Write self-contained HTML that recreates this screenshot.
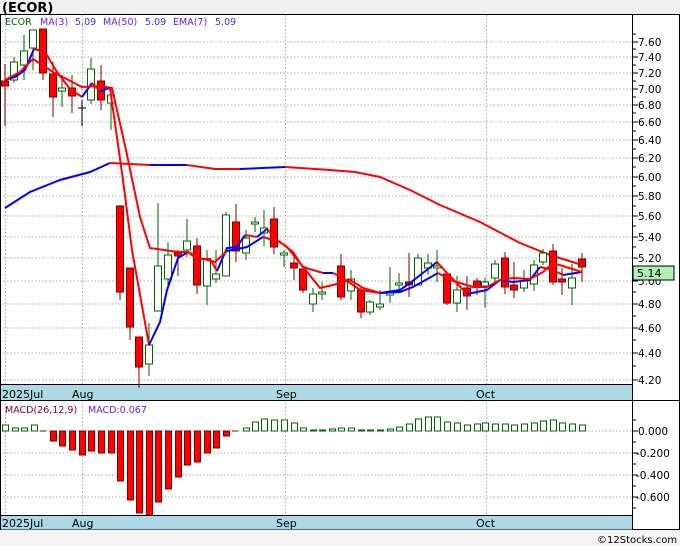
<!DOCTYPE html><html><head><style>body{margin:0;width:680px;height:546px;overflow:hidden;background:#fff;font-family:"DejaVu Sans","Liberation Sans",sans-serif}</style></head><body>
<svg width="680" height="546" xmlns="http://www.w3.org/2000/svg" font-family="DejaVu Sans, Liberation Sans, sans-serif">
<rect x="0" y="0" width="680" height="14" fill="#f0f0f0"/>
<text x="2" y="12" font-size="13" font-weight="bold" fill="#000">(ECOR)</text>
<rect x="0" y="530" width="680" height="16" fill="#f4f4f4"/>
<text x="597" y="543" font-size="10" fill="#000">©12Stocks.com</text>
<g stroke="#aaa" stroke-dasharray="1.5,2" stroke-width="1">
<path d="M0 42H632M0 57H632M0 73H632M0 89H632M0 105H632M0 122H632M0 140H632M0 158H632M0 177H632M0 196H632M0 216H632M0 237H632M0 258H632M0 281H632M0 304H632M0 328H632M0 353H632M0 380H632"/>
<path d="M5.5 15V515M82.5 15V515M285.5 15V515M486.5 15V515"/>
<path d="M0 431H632M0 453H632M0 475H632M0 497H632"/>
</g>
<g stroke="#000" fill="none">
<rect x="0.5" y="14.5" width="679" height="515"/>
<path d="M632.5 14V530M0 384.5H632M0 400.5H680M0 515.5H632"/>
</g>
<rect x="1" y="385" width="631" height="15" fill="#add8e6"/>
<rect x="1" y="516" width="631" height="13.5" fill="#add8e6"/>
<g font-size="11" fill="#000">
<text x="2" y="398">2025Jul</text><text x="72" y="398">Aug</text><text x="276" y="398">Sep</text><text x="476" y="398">Oct</text>
<text x="2" y="527">2025Jul</text><text x="72" y="527">Aug</text><text x="276" y="527">Sep</text><text x="476" y="527">Oct</text>
</g>
<g font-size="10.5" fill="#000">
<text x="638" y="46">7.60</text><text x="638" y="61">7.40</text><text x="638" y="77">7.20</text><text x="638" y="93">7.00</text><text x="638" y="109">6.80</text><text x="638" y="126">6.60</text><text x="638" y="144">6.40</text><text x="638" y="162">6.20</text><text x="638" y="181">6.00</text><text x="638" y="200">5.80</text><text x="638" y="220">5.60</text><text x="638" y="241">5.40</text><text x="638" y="262">5.20</text><text x="638" y="285">5.00</text><text x="638" y="308">4.80</text><text x="638" y="332">4.60</text><text x="638" y="357">4.40</text><text x="638" y="384">4.20</text>
<text x="638" y="435">0.000</text><text x="636" y="457">-0.200</text><text x="636" y="479">-0.400</text><text x="636" y="501">-0.600</text>
</g>
<g stroke="#000"><path d="M632 34h4M632 49h4M632 65h4M632 81h4M632 97h4M632 113h4M632 131h4M632 149h4M632 167h4M632 186h4M632 206h4M632 226h4M632 247h4M632 269h4M632 292h4M632 316h4M632 340h4M632 366h4M632 42h6M632 57h6M632 73h6M632 89h6M632 105h6M632 122h6M632 140h6M632 158h6M632 177h6M632 196h6M632 216h6M632 237h6M632 258h6M632 281h6M632 304h6M632 328h6M632 353h6M632 380h6M632 420h4M632 442h4M632 464h4M632 486h4M632 508h4M632 431h6M632 453h6M632 475h6M632 497h6"/></g>
<rect x="633" y="266" width="41" height="14" fill="#b0f0b0" stroke="#000"/>
<text x="637" y="277" font-size="11" fill="#000">5.14</text>
<text x="5" y="25" font-size="9.5" fill="#006400">ECOR</text>
<text x="40" y="25" font-size="9.5" fill="#6a1bf0">MA(3)</text><text x="75" y="25" font-size="9.5" fill="#3333ff">5.09</text>
<text x="103" y="25" font-size="9.5" fill="#6a1bf0">MA(50)</text><text x="145" y="25" font-size="9.5" fill="#3333ff">5.09</text>
<text x="173" y="25" font-size="9.5" fill="#6a1bf0">EMA(7)</text><text x="215" y="25" font-size="9.5" fill="#3333ff">5.09</text>
<text x="5" y="413" font-size="9.5" fill="#800040">MACD(26,12,9)</text>
<text x="88" y="413" font-size="9.5" fill="#6a1bf0">MACD:0.067</text>
<g fill="none" stroke-width="2">
<polyline stroke="#0000ff" points="5,208 30,192 60,180 90,172 110,163"/>
<polyline stroke="#ff0000" points="110,163 150,165"/>
<polyline stroke="#0000ff" points="150,165 187,165"/>
<polyline stroke="#ff0000" points="187,165 215,169 240,169"/>
<polyline stroke="#0000ff" points="240,169 285,167"/>
<polyline stroke="#ff0000" points="285,167 330,170 355,172 380,177 410,190 440,205 480,222 520,243 550,255 582,265"/>
</g>
<g stroke-width="1">
<g stroke="#800000" fill="#ff0000">
<path d="M5 64V126M43 29V80M53 62V117M72 75V113M101 65V110M120 205V300M130 268V340M139 337V388M178 250V276M197 238V294M236 204V262M274 207V254M294 254V280M303 268V293M341 254V300M361 288V318M409 253V297M447 272V305M467 276V310M477 278V295M505 252V294M514 262V298M553 244V285M562 268V295M582 253V282"/>
<rect x="1.5" y="81" width="7" height="5"/><rect x="39.5" y="29" width="7" height="44"/><rect x="49.5" y="74" width="7" height="23"/><rect x="68.5" y="88" width="7" height="8"/><rect x="97.5" y="81" width="7" height="19"/><rect x="116.5" y="206" width="7" height="86"/><rect x="126.5" y="268" width="7" height="59"/><rect x="135.5" y="337" width="7" height="30"/><rect x="174.5" y="253" width="7" height="3"/><rect x="193.5" y="246" width="7" height="39"/><rect x="232.5" y="222" width="7" height="29"/><rect x="270.5" y="219" width="7" height="28"/><rect x="290.5" y="263" width="7" height="5"/><rect x="299.5" y="269" width="7" height="21"/><rect x="337.5" y="266" width="7" height="31"/><rect x="357.5" y="290" width="7" height="22"/><rect x="405.5" y="282" width="7" height="3"/><rect x="443.5" y="274" width="7" height="29"/><rect x="463.5" y="288" width="7" height="8"/><rect x="473.5" y="281" width="7" height="6"/><rect x="501.5" y="258" width="7" height="29"/><rect x="510.5" y="285" width="7" height="5"/><rect x="549.5" y="251" width="7" height="31"/><rect x="558.5" y="279" width="7" height="3"/><rect x="578.5" y="259" width="7" height="8"/>
</g>
<g stroke="#006400" fill="#fff">
<path d="M14 57V83M24 35V80M33 30V70M62 75V107M91 58V104M111 90V130M149 323V376M158 203V311M168 242V290M187 219V257M207 250V305M216 250V283M226 212V276M246 230V260M255 217V232M264 210V246M284 250V267M313 288V312M322 282V300M351 270V300M370 300V315M380 290V310M390 267V303M399 273V293M418 254V285M428 254V275M437 250V282M457 276V312M485 278V308M495 260V282M524 270V292M534 260V291M543 249V265M572 264V305"/>
<rect x="10.5" y="62" width="7" height="18"/><rect x="20.5" y="51" width="7" height="14"/><rect x="29.5" y="30" width="7" height="18"/><rect x="58.5" y="88" width="7" height="3"/><rect x="87.5" y="69" width="7" height="31"/><rect x="107.5" y="95" width="7" height="8"/><rect x="145.5" y="345" width="7" height="19"/><rect x="154.5" y="266" width="7" height="45"/><rect x="164.5" y="255" width="7" height="24"/><rect x="183.5" y="241" width="7" height="9"/><rect x="203.5" y="259" width="7" height="27"/><rect x="212.5" y="274" width="7" height="5"/><rect x="222.5" y="215" width="7" height="61"/><rect x="242.5" y="238" width="7" height="15"/><rect x="251.5" y="222" width="7" height="2"/><rect x="260.5" y="228" width="7" height="5"/><rect x="280.5" y="253" width="7" height="2"/><rect x="309.5" y="294" width="7" height="10"/><rect x="318.5" y="292" width="7" height="2"/><rect x="347.5" y="279" width="7" height="12"/><rect x="366.5" y="302" width="7" height="10"/><rect x="376.5" y="304" width="7" height="3"/><rect x="386.5" y="292" width="7" height="3"/><rect x="395.5" y="283" width="7" height="2"/><rect x="414.5" y="258" width="7" height="27"/><rect x="424.5" y="263" width="7" height="5"/><rect x="433.5" y="266" width="7" height="2"/><rect x="453.5" y="290" width="7" height="13"/><rect x="481.5" y="282" width="7" height="4"/><rect x="491.5" y="264" width="7" height="14"/><rect x="520.5" y="281" width="7" height="7"/><rect x="530.5" y="265" width="7" height="19"/><rect x="539.5" y="253" width="7" height="9"/><rect x="568.5" y="278" width="7" height="10"/>
</g>
<path d="M78 108h8M82 100V126" stroke="#000"/>
</g>
<g fill="none" stroke-width="2">
<polyline stroke="#0000ff" points="5,80 15,77 25,70 34,49"/>
<polyline stroke="#ff0000" points="34,49 45,52 57,72 70,89 82,97"/>
<polyline stroke="#0000ff" points="82,97 92,83"/>
<polyline stroke="#ff0000" points="92,83 100,91"/>
<polyline stroke="#0000ff" points="100,91 110,88"/>
<polyline stroke="#ff0000" points="110,88 123,180 132,250 149,345"/>
<polyline stroke="#0000ff" points="149,345 160,322 167,290 178,258 188,252"/>
<polyline stroke="#ff0000" points="188,252 197,259 210,259 217,271"/>
<polyline stroke="#0000ff" points="217,271 227,248 237,247 245,235"/>
<polyline stroke="#ff0000" points="245,235 257,237"/>
<polyline stroke="#0000ff" points="257,237 267,229"/>
<polyline stroke="#ff0000" points="267,229 277,240 287,247 303,267 323,273"/>
<polyline stroke="#0000ff" points="323,273 333,273"/>
<polyline stroke="#ff0000" points="333,273 343,278 360,290 380,293"/>
<polyline stroke="#0000ff" points="380,293 400,290 410,283 437,262"/>
<polyline stroke="#ff0000" points="437,262 447,273 467,294"/>
<polyline stroke="#0000ff" points="467,294 487,290 500,280 513,282 530,280 540,267"/>
<polyline stroke="#ff0000" points="540,267 553,270 563,275"/>
<polyline stroke="#0000ff" points="563,275 582,272"/>
<polyline stroke="#ff0000" points="5,80 20,72 33,59 53,72 82,87 100,86 112,88 126,150 140,217 150,248 178,252 188,252 200,258 215,262 227,251"/>
<polyline stroke="#0000ff" points="227,251 247,247 263,237"/>
<polyline stroke="#ff0000" points="263,237 280,242 293,252 300,263 320,288 333,285 350,280 363,288 380,293"/>
<polyline stroke="#0000ff" points="380,293 400,292 413,287 438,273"/>
<polyline stroke="#ff0000" points="438,273 450,280 473,287 487,287 500,280 513,278 530,279 543,272 553,263 582,272"/>
</g>
<g stroke="#800000" fill="#ff0000">
<path d="M40 431h6M232 431h6"/>
<rect x="50.5" y="431" width="6" height="10"/><rect x="59.5" y="431" width="6" height="15"/><rect x="69.5" y="431" width="6" height="19"/><rect x="79.5" y="431" width="6" height="24"/><rect x="88.5" y="431" width="6" height="20"/><rect x="98.5" y="431" width="6" height="22"/><rect x="108.5" y="431" width="6" height="22"/><rect x="117.5" y="431" width="6" height="50"/><rect x="127.5" y="431" width="6" height="69"/><rect x="136.5" y="431" width="6" height="82"/><rect x="146.5" y="431" width="6" height="84"/><rect x="155.5" y="431" width="6" height="71"/><rect x="165.5" y="431" width="6" height="58"/><rect x="175.5" y="431" width="6" height="46"/><rect x="184.5" y="431" width="6" height="34"/><rect x="194.5" y="431" width="6" height="31"/><rect x="204.5" y="431" width="6" height="22"/><rect x="213.5" y="431" width="6" height="17"/><rect x="223.5" y="431" width="6" height="5"/>
</g>
<g stroke="#006400" fill="#fff">
<rect x="2.5" y="425" width="6" height="6"/><rect x="12.5" y="428" width="6" height="3"/><rect x="21.5" y="428" width="6" height="3"/><rect x="31.5" y="425" width="6" height="6"/>
<rect x="243.5" y="428" width="6" height="3"/><rect x="252.5" y="422" width="6" height="9"/><rect x="261.5" y="419" width="6" height="12"/><rect x="271.5" y="420" width="6" height="11"/><rect x="281.5" y="420" width="6" height="11"/><rect x="291.5" y="423" width="6" height="8"/>
<rect x="300.5" y="428" width="6" height="3"/><rect x="310.5" y="430" width="6" height="1"/><rect x="319.5" y="430" width="6" height="1"/><rect x="329.5" y="429" width="6" height="2"/><rect x="338.5" y="428" width="6" height="3"/><rect x="348.5" y="428" width="6" height="3"/><rect x="358.5" y="430" width="6" height="1"/><rect x="367.5" y="430" width="6" height="1"/><rect x="377.5" y="430" width="6" height="1"/><rect x="387.5" y="429" width="6" height="2"/><rect x="396.5" y="427" width="6" height="4"/><rect x="406.5" y="424" width="6" height="7"/><rect x="415.5" y="419" width="6" height="12"/><rect x="425.5" y="417" width="6" height="14"/><rect x="434.5" y="417" width="6" height="14"/><rect x="444.5" y="422" width="6" height="9"/><rect x="454.5" y="423" width="6" height="8"/><rect x="464.5" y="425" width="6" height="6"/><rect x="474.5" y="424" width="6" height="7"/><rect x="482.5" y="423" width="6" height="8"/><rect x="492.5" y="424" width="6" height="7"/><rect x="502.5" y="424" width="6" height="7"/><rect x="511.5" y="425" width="6" height="6"/><rect x="521.5" y="424" width="6" height="7"/><rect x="531.5" y="423" width="6" height="8"/><rect x="540.5" y="421" width="6" height="10"/><rect x="550.5" y="420" width="6" height="11"/><rect x="559.5" y="423" width="6" height="8"/><rect x="569.5" y="424" width="6" height="7"/><rect x="579.5" y="425" width="6" height="6"/>
</g>
</svg>
</body></html>
